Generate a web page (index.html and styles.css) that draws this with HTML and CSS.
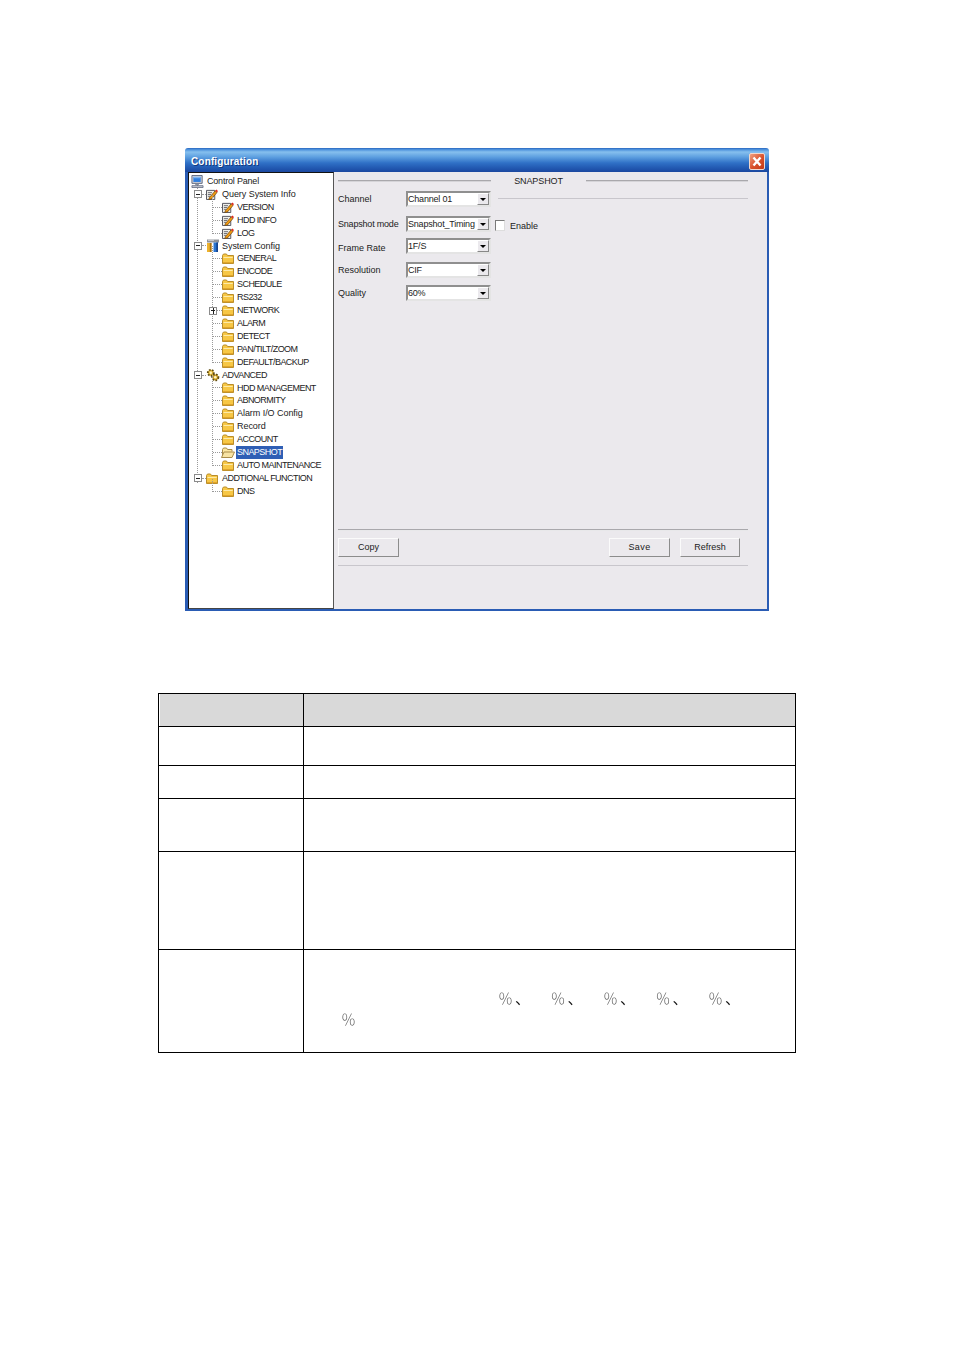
FILE: index.html
```html
<!DOCTYPE html>
<html lang="en">
<head>
<meta charset="utf-8">
<title>Configuration</title>
<link rel="stylesheet" href="styles.css">
</head>
<body>
<svg class="defs" width="0" height="0" aria-hidden="true">
  <symbol id="folder" viewBox="0 0 12 11">
    <path d="M.5 2.500 1.500 1h3l1 1.500h6v8h-11z" fill="#f7c745" stroke="#b98d2a" stroke-width="1"/>
    <path d="M1.500 4h9.200v1H1.500z" fill="#fdeaa8"/>
    <path d="M1 9h10v1.200H1z" fill="#e0a52c"/>
  </symbol>
  <symbol id="folder-open" viewBox="0 0 14 11">
    <path d="M1.500 9.500v-7l1-1.500h3l1 1.500h4.500v2" fill="#fbe6a0" stroke="#a88b4a"/>
    <path d="M.5 10.500 3 5h10.500l-2.500 5.500z" fill="#f7e3a3" stroke="#a88b4a"/>
  </symbol>
  <symbol id="note" viewBox="0 0 13 12">
    <path d="M.5 1.500h9v10h-9z" fill="#eeeee8" stroke="#4c4c56"/>
    <path d="M2 4h4.500M2 6h3.500M2 8h2.500" stroke="#66666f"/>
    <path d="M3.500 9.500 10 2l2 1.800-6 7-3 .7z" fill="#f09a12" stroke="#5f3a0c" stroke-width=".7"/>
    <path d="M10 2 11.300.6 13 2.200 12 3.800z" fill="#e0281e"/>
  </symbol>
  <symbol id="monitor" viewBox="0 0 13 14">
    <path d="M.5.500h11v8.500h-11z" fill="#d6d8de" stroke="#55607a"/>
    <path d="M2 2h8v5.500H2z" fill="#2f7fe0"/>
    <path d="M2 2h8v1.500H2z" fill="#7db4f2"/>
    <path d="M4 9.500h4v1.500H4z" fill="#8e93a0"/>
    <path d="M.5 11.500h12v2H.5z" fill="#c9ccd4" stroke="#55607a" stroke-width=".8"/>
  </symbol>
  <symbol id="tools" viewBox="0 0 13 13">
    <path d="M1 .5h12v3H1z" fill="#8f9298"/>
    <path d="M2 .5h6v1.300H2z" fill="#d2d4d8"/>
    <path d="M1 4h4.500v9H1z" fill="#edb22e"/>
    <path d="M3.800 4h1.700v9H3.800z" fill="#a86f14"/>
    <path d="M7.500 3.500H12V13H7.500z" fill="#2a74cf"/>
    <path d="M10.300 3.500H12V13h-1.700z" fill="#15448e"/>
  </symbol>
  <symbol id="gears" viewBox="0 0 14 14">
    <circle cx="4.800" cy="4.800" r="3" fill="#e3b93a" stroke="#5f4c14" stroke-width="1.800" stroke-dasharray="1.600 1.400"/>
    <circle cx="9.300" cy="9.300" r="3.100" fill="#d8a92c" stroke="#5f4c14" stroke-width="1.800" stroke-dasharray="1.600 1.400"/>
    <circle cx="4.800" cy="4.800" r="1.200" fill="#fff4c0"/>
    <circle cx="9.300" cy="9.300" r="1.300" fill="#fff4c0"/>
  </symbol>
</svg>

<main class="page">
  <section class="window">
    <header class="titlebar">
      <h1 class="title">Configuration</h1>
      <div class="close">
        <svg viewBox="0 0 16 17" width="16" height="17"><path d="M4.500 4.500 11.500 12.500M11.500 4.500 4.500 12.500" stroke="#fff" stroke-width="2.400" fill="none"/></svg>
      </div>
    </header>
    <div class="client">
      <nav class="tree">
        <div class="row r0"><svg class="ico ico-mon"><use href="#monitor"/></svg><span class="lbl">Control Panel</span></div>

        <div class="row r1"><span class="exp minus"></span><span class="tick t1"></span><svg class="ico"><use href="#note"/></svg><span class="lbl">Query System Info</span></div>
        <div class="group">
          <div class="row r2"><span class="tick t2"></span><svg class="ico"><use href="#note"/></svg><span class="lbl uc">VERSION</span></div>
          <div class="row r2"><span class="tick t2"></span><svg class="ico"><use href="#note"/></svg><span class="lbl uc">HDD INFO</span></div>
          <div class="row r2"><span class="tick t2"></span><svg class="ico"><use href="#note"/></svg><span class="lbl uc">LOG</span></div>
        </div>

        <div class="row r1"><span class="exp minus"></span><span class="tick t1"></span><svg class="ico ico-tools"><use href="#tools"/></svg><span class="lbl">System Config</span></div>
        <div class="group">
          <div class="row r2"><span class="tick t2"></span><svg class="ico"><use href="#folder"/></svg><span class="lbl uc">GENERAL</span></div>
          <div class="row r2"><span class="tick t2"></span><svg class="ico"><use href="#folder"/></svg><span class="lbl uc">ENCODE</span></div>
          <div class="row r2"><span class="tick t2"></span><svg class="ico"><use href="#folder"/></svg><span class="lbl uc">SCHEDULE</span></div>
          <div class="row r2"><span class="tick t2"></span><svg class="ico"><use href="#folder"/></svg><span class="lbl uc">RS232</span></div>
          <div class="row r2b"><span class="exp plus"></span><span class="tick t3"></span><svg class="ico"><use href="#folder"/></svg><span class="lbl uc">NETWORK</span></div>
          <div class="row r2"><span class="tick t2"></span><svg class="ico"><use href="#folder"/></svg><span class="lbl uc">ALARM</span></div>
          <div class="row r2"><span class="tick t2"></span><svg class="ico"><use href="#folder"/></svg><span class="lbl uc">DETECT</span></div>
          <div class="row r2"><span class="tick t2"></span><svg class="ico"><use href="#folder"/></svg><span class="lbl uc">PAN/TILT/ZOOM</span></div>
          <div class="row r2"><span class="tick t2"></span><svg class="ico"><use href="#folder"/></svg><span class="lbl uc">DEFAULT/BACKUP</span></div>
        </div>

        <div class="row r1"><span class="exp minus"></span><span class="tick t1"></span><svg class="ico ico-gear"><use href="#gears"/></svg><span class="lbl uc">ADVANCED</span></div>
        <div class="group">
          <div class="row r2"><span class="tick t2"></span><svg class="ico"><use href="#folder"/></svg><span class="lbl uc">HDD MANAGEMENT</span></div>
          <div class="row r2"><span class="tick t2"></span><svg class="ico"><use href="#folder"/></svg><span class="lbl uc">ABNORMITY</span></div>
          <div class="row r2"><span class="tick t2"></span><svg class="ico"><use href="#folder"/></svg><span class="lbl">Alarm I/O Config</span></div>
          <div class="row r2"><span class="tick t2"></span><svg class="ico"><use href="#folder"/></svg><span class="lbl">Record</span></div>
          <div class="row r2"><span class="tick t2"></span><svg class="ico"><use href="#folder"/></svg><span class="lbl uc">ACCOUNT</span></div>
          <div class="row r2"><span class="tick t2"></span><svg class="ico ico-open"><use href="#folder-open"/></svg><span class="lbl uc selected">SNAPSHOT</span></div>
          <div class="row r2"><span class="tick t2"></span><svg class="ico"><use href="#folder"/></svg><span class="lbl uc">AUTO MAINTENANCE</span></div>
        </div>

        <div class="row r1"><span class="exp minus"></span><span class="tick t1"></span><svg class="ico"><use href="#folder"/></svg><span class="lbl uc">ADDTIONAL FUNCTION</span></div>
        <div class="group">
          <div class="row r2"><span class="tick t2"></span><svg class="ico"><use href="#folder"/></svg><span class="lbl uc">DNS</span></div>
        </div>
      </nav>

      <div class="pane">
        <div class="legend">
          <span class="legend-line line-a"></span>
          <span class="legend-text">SNAPSHOT</span>
          <span class="legend-line line-b"></span>
        </div>

        <div class="form">
          <div class="field">
            <span class="flabel">Channel</span>
            <div class="select"><span>Channel 01</span><i class="arrow"></i></div>
            <span class="field-rule"></span>
          </div>
          <div class="field">
            <span class="flabel flabel-mode">Snapshot mode</span>
            <div class="select"><span>Snapshot_Timing</span><i class="arrow"></i></div>
            <span class="check"></span><span class="check-label">Enable</span>
          </div>
          <div class="field">
            <span class="flabel flabel-low">Frame Rate</span>
            <div class="select"><span>1F/S</span><i class="arrow"></i></div>
          </div>
          <div class="field">
            <span class="flabel">Resolution</span>
            <div class="select"><span>CIF</span><i class="arrow"></i></div>
          </div>
          <div class="field">
            <span class="flabel">Quality</span>
            <div class="select"><span>60%</span><i class="arrow"></i></div>
          </div>
        </div>

        <div class="footer">
          <div class="rule-top"></div>
          <div class="buttons">
            <span class="btn btn-copy">Copy</span>
            <span class="btn btn-save">Save</span>
            <span class="btn btn-refresh">Refresh</span>
          </div>
          <div class="rule-bottom"></div>
        </div>
      </div>
    </div>
  </section>

  <table class="params">
    <colgroup><col class="col-a"><col class="col-b"></colgroup>
    <tr class="h-head"><th></th><th></th></tr>
    <tr class="h-a"><td></td><td></td></tr>
    <tr class="h-b"><td></td><td></td></tr>
    <tr class="h-c"><td></td><td></td></tr>
    <tr class="h-d"><td></td><td></td></tr>
    <tr class="h-e"><td></td>
      <td class="marks-cell">
        <div class="marks"><span>％<i class="sep">、</i></span><span>％<i class="sep">、</i></span><span>％<i class="sep">、</i></span><span>％<i class="sep">、</i></span><span>％<i class="sep">、</i></span></div>
        <div class="marks-last">％</div>
      </td>
    </tr>
  </table>
</main>
</body>
</html>
```
FILE: styles.css
```css
* { box-sizing: border-box; }
html, body { margin: 0; padding: 0; background: #fff; }
body { height: 1350px; overflow: hidden; font-family: "Liberation Sans", Arial, sans-serif; color: #222; }
.defs { position: absolute; }
.page { padding-top: 148px; }

.window { width: 584px; height: 463px; margin-left: 185px; display: flex; flex-direction: column; }
.titlebar {
  height: 24px; flex: none; display: flex; align-items: center; justify-content: space-between;
  padding: 2px 4px 0 6px;
  background: linear-gradient(#2a62b8 0, #3f86d8 1px, #86c0ee 4px, #5d9fe0 9px, #2f70c6 15px, #1f54ad 21px, #1c48a0 24px);
  border-radius: 3px 3px 0 0;
}
.title { margin: 2px 0 0; font-size: 10px; font-weight: bold; line-height: 14px; color: #fff; letter-spacing: .15px; text-shadow: 1px 1px 0 #123a80; }
.close { width: 16px; height: 17px; background: linear-gradient(135deg, #f0a080, #d8502a 55%, #c23a18); border: 1px solid #f3d8cc; border-radius: 2px; }
.close svg { display: block; margin: -1px; }

.client { flex: 1; display: flex; min-height: 0; border: solid #2a5cb4; border-width: 0 2px 2px 3px; background: #ebe9ed; }

.tree {
  width: 146px; flex: none; position: relative; padding-top: 2px; background: #fff;
  border-left: 1px solid #111; border-top: 1px solid #111; border-right: 1px solid #555; border-bottom: 1px solid #444;
  font-size: 9px; line-height: 12.920px; letter-spacing: -.05px;
}
.tree::before { content: ""; position: absolute; left: 8px; top: 12px; bottom: 125px; border-left: 1px dotted #9a9a9a; }
.row { height: 12.920px; display: flex; align-items: center; white-space: nowrap; position: relative; }
.r0 { padding-left: 2px; }
.r1 { padding-left: 5px; }
.r2 { padding-left: 24px; }
.r2b { padding-left: 20px; }
.group { position: relative; }
.group::before { content: ""; position: absolute; left: 23px; top: -6px; bottom: 6px; border-left: 1px dotted #9a9a9a; }
.exp { width: 8px; height: 8px; flex: none; position: relative; z-index: 1; border: 1px solid #8b8b8b; background: #fff; }
.exp::before { content: ""; position: absolute; left: 1px; right: 1px; top: 2.500px; height: 1px; background: #222; }
.plus::after { content: ""; position: absolute; top: 0; bottom: 0; left: 2.500px; width: 1px; background: #222; }
.tick { border-top: 1px dotted #9a9a9a; flex: none; height: 0; }
.t1 { width: 4px; }
.t2 { width: 9px; }
.t3 { width: 5px; }
.ico { width: 12px; height: 11px; flex: none; }
.ico-mon { width: 13px; height: 13px; }
.ico-tools { width: 13px; height: 13px; margin-right: -1px; }
.ico-gear { width: 14px; height: 14px; margin: -1px -2px 0 0; }
.ico-open { width: 14px; margin: 0 -2px 0 -1px; }
.lbl { margin-left: 4px; }
.r2 .lbl, .r2b .lbl { margin-left: 3px; }
.tree .uc { letter-spacing: -.55px; }
.tree .selected { background: #2f5fb5; color: #fff; margin-left: 3px; padding: 0 1px; }
.r0 .lbl { margin-left: 3px; letter-spacing: -.2px; }

.pane { flex: 1; min-width: 0; display: flex; flex-direction: column; padding: 0 19px 0 4px; font-size: 9px; color: #222; }
.legend { height: 18px; flex: none; display: flex; align-items: center; }
.legend-line { height: 2px; background: #a9a8ac; border-bottom: 1px solid #d5d4d8; display: block; }
.line-a { width: 153px; }
.line-b { flex: 1; }
.legend-text { width: 95px; text-align: center; letter-spacing: -.1px; }

.form { display: grid; grid-template-rows: 25px 22px 24px 23px 16px; margin-top: 1px; }
.field { display: flex; align-items: flex-start; }
.flabel { width: 68px; line-height: 16px; flex: none; }
.flabel-mode { letter-spacing: -.2px; line-height: 17px; }
.flabel-low { line-height: 20px; }
.select {
  width: 85px; height: 16px; flex: none; display: flex; align-items: center; justify-content: space-between;
  background: #fff; border: 2px solid; border-color: #8f8f8f #e4e4e4 #e4e4e4 #8f8f8f; padding-left: 0; line-height: 12px; white-space: nowrap; letter-spacing: -.2px;
}
.arrow { width: 12px; height: 12px; flex: none; position: relative; background: #ebe9ed; border: 1px solid; border-color: #fff #888 #888 #fff; }
.arrow::after { content: ""; position: absolute; left: 2px; top: 4px; border: 3px solid transparent; border-top: 3px solid #000; border-bottom: 0; }
.field-rule { flex: 1; height: 1px; margin: 7px 0 0 7px; background: #c8c6cc; }
.check { width: 10px; height: 11px; margin: 4px 0 0 4px; background: #fff; border: 1px solid; border-color: #7a7a7a #ddd #ddd #7a7a7a; flex: none; }
.check-label { margin-left: 5px; line-height: 20px; }

.footer { margin-top: auto; margin-bottom: 43px; }
.rule-top { height: 2px; background: #a9a8ac; border-bottom: 1px solid #e8e8ea; }
.rule-bottom { height: 1px; background: #c8c6cc; }
.buttons { display: flex; padding: 7px 0 8px; }
.btn { height: 19px; text-align: center; line-height: 17px; background: #ebe9ed; border: 1.500px solid; border-color: #fbfbfb #8c8c8c #8c8c8c #fbfbfb; }
.btn-copy { width: 61px; }
.btn-save { width: 61px; margin-left: auto; letter-spacing: .4px; }
.btn-refresh { width: 60px; margin: 0 8px 0 10px; }

.params { width: 638px; margin: 82px 0 0 158px; border-collapse: collapse; table-layout: fixed; }
.col-a { width: 145px; }
.params th, .params td { border: 1px solid #000; padding: 0; }
.params th { background: #d9d9d9; }
.params th:first-child { box-shadow: inset 1px 0 #fff; }
.h-head { height: 33px; }
.h-a { height: 39px; }
.h-b { height: 33px; }
.h-c { height: 53px; }
.h-d { height: 98px; }
.h-e { height: 103px; }
.marks-cell { vertical-align: top; font-family: "Noto Sans CJK SC", sans-serif; font-size: 15px; line-height: 20.500px; color: #666; font-weight: 300; }
.params .marks-cell { padding-top: 38px; }
.marks, .marks-last { will-change: transform; }
.marks { display: flex; padding-left: 194px; gap: 22.500px; }
.marks span { width: 30px; flex: none; }
.sep { font-style: normal; color: #111; font-weight: 400; margin-left: 2px; }
.marks-last { padding-left: 37px; }
```
